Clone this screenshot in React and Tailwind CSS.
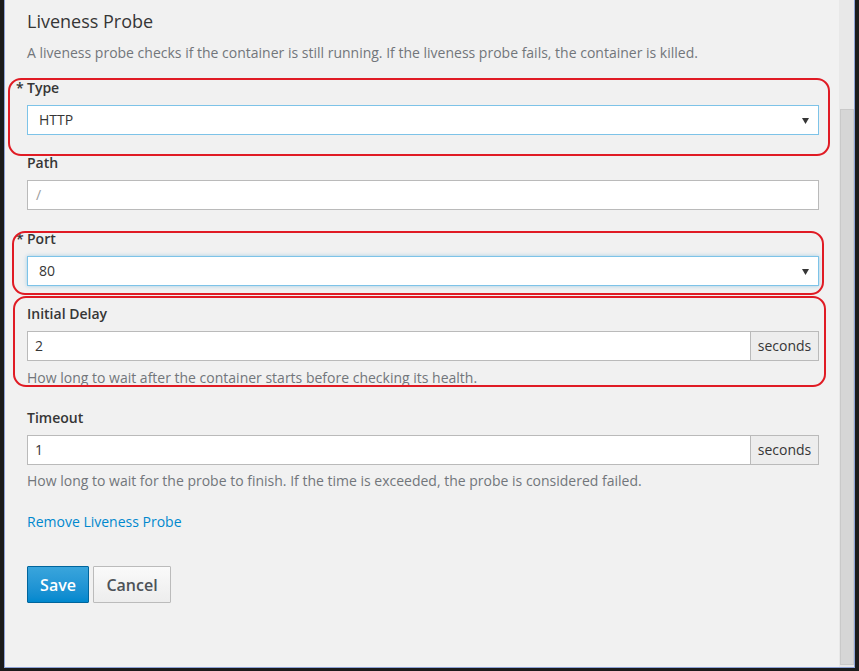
import React from "react";

function Caret() {
  return (
    <svg width="7" height="6" viewBox="0 0 7 6" className="absolute right-[9px] top-[12px]">
      <path d="M0 0 L7 0 L3.5 6 Z" fill="#363636" />
    </svg>
  );
}

function Label({ children, required }) {
  return (
    <div className="relative h-[20px] text-[14px] font-semibold leading-[20px] text-[#363636]">
      {required && <span className="absolute left-[-11px] top-0">*</span>}
      {children}
    </div>
  );
}

function Select({ value, glow }) {
  return (
    <div
      className={
        "relative mt-[7px] h-[30px] border border-[#7dc3e8] bg-white pl-[11px] text-[14px] leading-[28px] text-[#363636] " +
        (glow ? "shadow-[0_0_4px_rgba(0,136,206,0.35)]" : "")
      }
    >
      {value}
      <Caret />
    </div>
  );
}

function SecondsInput({ value }) {
  return (
    <div className="mt-[7px] flex h-[30px]">
      <div className="flex-1 border border-[#bababa] bg-white pl-[7px] text-[14px] leading-[28px] text-[#363636]">
        {value}
      </div>
      <div className="w-[68px] border border-l-0 border-[#bababa] bg-[#ededed] text-center text-[14px] leading-[28px] text-[#363636]">
        seconds
      </div>
    </div>
  );
}

function Help({ children, mt }) {
  return <div className={mt + " text-[14px] leading-[20px] text-[#72767b]"}>{children}</div>;
}

export default function App() {
  return (
    <div
      className="h-[671px] w-[859px] bg-[#1b1b1b] pb-[3px] pl-[4px] pr-[4px]"
      style={{ fontFamily: '"Open Sans", "Noto Sans", sans-serif' }}
    >
      <div className="flex h-full border-x border-b border-[#8da2d6] bg-[#f1f1f1]">
        <div className="relative flex-1 pl-[22px]">
          <div className="w-[792px]">
            <div className="pt-[8px] text-[18px] leading-[26px] text-[#363636]">Liveness Probe</div>
            <div className="mt-[9px] text-[14px] leading-[20px] text-[#72767b]">
              A liveness probe checks if the container is still running. If the liveness probe fails, the container is killed.
            </div>

            <div className="mt-[15px]">
              <Label required>Type</Label>
              <Select value="HTTP" />
            </div>

            <div className="mt-[18px]">
              <Label>Path</Label>
              <div className="mt-[7px] h-[30px] border border-[#bababa] bg-white pl-[8px] text-[14px] leading-[28px] text-[#9c9c9c]">
                /
              </div>
            </div>

            <div className="mt-[19px]">
              <Label required>Port</Label>
              <Select value="80" glow />
            </div>

            <div className="mt-[18px]">
              <Label>Initial Delay</Label>
              <SecondsInput value="2" />
              <Help mt="mt-[7px]">How long to wait after the container starts before checking its health.</Help>
            </div>

            <div className="mt-[20px]">
              <Label>Timeout</Label>
              <SecondsInput value="1" />
              <Help mt="mt-[6px]">How long to wait for the probe to finish. If the time is exceeded, the probe is considered failed.</Help>
            </div>

            <div className="mt-[21px] text-[14px] leading-[20px] text-[#0088ce]">Remove Liveness Probe</div>

            <div className="mt-[34px] flex gap-[4px]">
              <button className="h-[37px] w-[62px] rounded-[1px] border border-[#00659c] bg-gradient-to-b from-[#39a5dc] to-[#0088ce] text-[16px] font-semibold text-white">
                Save
              </button>
              <button className="h-[37px] w-[78px] rounded-[1px] border border-[#bbbbbb] bg-gradient-to-b from-[#fafafa] to-[#ededed] text-[16px] font-semibold text-[#4d5258]">
                Cancel
              </button>
            </div>
          </div>

          <div className="pointer-events-none absolute left-[3px] top-[78px] h-[78px] w-[822px] rounded-[13px] border-2 border-[#e01b24]" />
          <div className="pointer-events-none absolute left-[7px] top-[231px] h-[64px] w-[812px] rounded-[13px] border-2 border-[#e01b24]" />
          <div className="pointer-events-none absolute left-[8px] top-[296px] h-[91px] w-[813px] rounded-[13px] border-2 border-[#e01b24]" />
        </div>

        <div className="flex w-[15px] flex-col bg-[#e8e8e8] pl-[1px] pt-[109px] pb-[2px]">
          <div className="flex-1 border border-[#c9c9c9] bg-[#d6d6d6]" />
        </div>
      </div>
    </div>
  );
}
